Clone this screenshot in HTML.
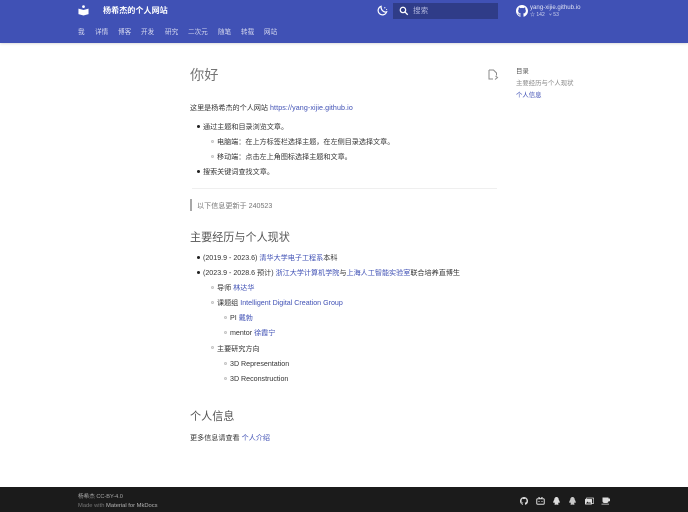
<!DOCTYPE html>
<html lang="zh"><head><meta charset="utf-8"><title>杨希杰的个人网站</title>
<style>
html,body{margin:0;padding:0;width:688px;height:512px;overflow:hidden;background:#fff}
body{font-family:"Liberation Sans","Noto Sans CJK SC",sans-serif;position:relative;font-size:7.1px;color:#333;filter:blur(.35px)}
.t{position:absolute;white-space:nowrap;line-height:10px}
a{color:#4051b5;text-decoration:none}
#h{position:absolute;left:0;top:0;width:688px;height:43px;background:#4051b5;box-shadow:0 0 3px rgba(0,0,0,.25)}
#h .n{color:#d5d8ef;font-size:6.6px;top:28px}
#f{position:absolute;left:0;top:487px;width:688px;height:25px;background:#1b1b1b}
.b{position:absolute;width:3px;height:3px;border-radius:50%;background:#222}
.o{position:absolute;width:3px;height:3px;border-radius:50%;border:.6px solid #c4c4c4;box-sizing:border-box;background:#eee}
svg{position:absolute}
</style></head><body>
<div id="h">
<svg style="left:78px;top:5px" width="11" height="11" viewBox="0 0 24 24" fill="#fff"><circle cx="12" cy="3.600" r="3"/><path d="M1 8l11 3 11-3v12l-11 3-11-3z"/></svg>
<div class="t" style="left:103px;top:6px;font-size:8.100px;color:#fff;font-weight:700">杨希杰的个人网站</div>
<div class="t n" style="left:78px">我</div>
<div class="t n" style="left:95px">详情</div>
<div class="t n" style="left:118px">博客</div>
<div class="t n" style="left:141px">开发</div>
<div class="t n" style="left:165px">研究</div>
<div class="t n" style="left:188px">二次元</div>
<div class="t n" style="left:218px">随笔</div>
<div class="t n" style="left:241px">转载</div>
<div class="t n" style="left:264px">网站</div>
<svg style="left:377px;top:5px" width="11" height="11" viewBox="0 0 24 24" fill="none" stroke="#fff" stroke-width="2.600"><path d="M9 3a9.500 9.500 0 1 0 12 12c-6 2-13-4-12-12z"/><circle cx="17" cy="6" r="1.400" fill="#fff" stroke="none"/><circle cx="21" cy="10" r="1.200" fill="#fff" stroke="none"/></svg>
<div style="position:absolute;left:393px;top:3px;width:105px;height:16px;background:#2f3c88"></div>
<svg style="left:399px;top:6px" width="10" height="10" viewBox="0 0 24 24" fill="none" stroke="#fff" stroke-width="3"><circle cx="9.500" cy="9.500" r="6.500"/><path d="M14.500 14.500L21 21"/></svg>
<div class="t" style="left:413px;top:6px;font-size:7.600px;color:#aeb4dc">搜索</div>
<svg style="left:516px;top:5px" width="12" height="12" viewBox="0 0 16 16" fill="#fff"><path d="M8 0C3.580 0 0 3.580 0 8c0 3.540 2.290 6.530 5.470 7.590.4.070.55-.17.55-.38 0-.19-.01-.82-.01-1.490-2.010.37-2.530-.49-2.690-.94-.09-.23-.48-.94-.82-1.130-.28-.15-.68-.52-.01-.53.630-.01 1.080.58 1.230.82.720 1.210 1.870.87 2.330.66.070-.52.280-.87.510-1.070-1.780-.2-3.640-.89-3.640-3.950 0-.87.310-1.590.82-2.150-.08-.2-.36-1.020.08-2.120 0 0 .67-.21 2.200.82a7.400 7.400 0 0 1 4 0c1.530-1.040 2.200-.82 2.200-.82.440 1.100.16 1.920.08 2.120.51.560.82 1.270.82 2.150 0 3.070-1.870 3.750-3.650 3.950.290.250.540.730.540 1.480 0 1.070-.01 1.930-.01 2.200 0 .21.150.46.550.38A8.010 8.010 0 0 0 16 8c0-4.420-3.580-8-8-8z"/></svg>
<div class="t" style="left:530px;top:2.500px;font-size:6.100px;color:#dfe2f3">yang-xijie.github.io</div>
<div class="t" style="left:530px;top:9.500px;font-size:5px;color:#d3d7ef">☆ 142 &nbsp;&nbsp;⑂ 53</div>
</div>

<div class="t" style="left:190px;top:66px;height:20px;line-height:20px;font-size:14.200px;color:#757575">你好</div>
<svg style="left:487px;top:69px" width="12" height="11" viewBox="0 0 24 22" fill="none" stroke="#8a8a8a" stroke-width="2"><path d="M4 2h9l6 6v5M4 2v18h8M17 14l4 3-5 4"/></svg>
<div class="t" style="left:190px;top:103px">这里是杨希杰的个人网站 <a href="#" style="letter-spacing:.1px">https://yang-xijie.github.io</a></div>

<div class="b" style="left:197px;top:125px"></div>
<div class="t" style="left:203px;top:122px">通过主题和目录浏览文章。</div>
<div class="o" style="left:210.500px;top:140px"></div>
<div class="t" style="left:217px;top:137px">电脑端：在上方标签栏选择主题，在左侧目录选择文章。</div>
<div class="o" style="left:210.500px;top:155px"></div>
<div class="t" style="left:217px;top:152px">移动端：点击左上角图标选择主题和文章。</div>
<div class="b" style="left:197px;top:170px"></div>
<div class="t" style="left:203px;top:167px">搜索关键词查找文章。</div>

<div style="position:absolute;left:192px;top:188px;width:305px;height:1px;background:#efefef"></div>
<div style="position:absolute;left:190px;top:199px;width:1.500px;height:12px;background:#a8a8a8"></div>
<div class="t" style="left:197px;top:201px;color:#757575">以下信息更新于 240523</div>

<div class="t" style="left:190px;top:231.500px;height:12px;line-height:12px;font-size:11.100px;color:#555">主要经历与个人现状</div>

<div class="b" style="left:197px;top:256px"></div>
<div class="t" style="left:203px;top:253px">(2019.9 - 2023.6) <a href="#">清华大学电子工程系</a>本科</div>
<div class="b" style="left:197px;top:271px"></div>
<div class="t" style="left:203px;top:268px">(2023.9 - 2028.6 预计) <a href="#">浙江大学计算机学院</a>与<a href="#">上海人工智能实验室</a>联合培养直博生</div>
<div class="o" style="left:210.500px;top:286px"></div>
<div class="t" style="left:217px;top:283px">导师 <a href="#">林达华</a></div>
<div class="o" style="left:210.500px;top:301px"></div>
<div class="t" style="left:217px;top:298px">课题组 <a href="#">Intelligent Digital Creation Group</a></div>
<div class="o" style="left:224px;top:316px"></div>
<div class="t" style="left:230px;top:313px">PI <a href="#">戴勃</a></div>
<div class="o" style="left:224px;top:331px"></div>
<div class="t" style="left:230px;top:328px">mentor <a href="#">徐霞宁</a></div>
<div class="o" style="left:210.500px;top:346px"></div>
<div class="t" style="left:217px;top:343.500px">主要研究方向</div>
<div class="o" style="left:224px;top:362px"></div>
<div class="t" style="left:230px;top:359px">3D Representation</div>
<div class="o" style="left:224px;top:377px"></div>
<div class="t" style="left:230px;top:374px">3D Reconstruction</div>

<div class="t" style="left:190px;top:411px;height:12px;line-height:12px;font-size:11.100px;color:#555">个人信息</div>
<div class="t" style="left:190px;top:433px">更多信息请查看 <a href="#">个人介绍</a></div>

<div class="t" style="left:516px;top:67px;font-size:6.400px;color:#555">目录</div>
<div class="t" style="left:516px;top:79px;font-size:6.400px;color:#8a8a8a">主要经历与个人现状</div>
<div class="t" style="left:516px;top:91px;font-size:6.400px"><a href="#">个人信息</a></div>

<div id="f">
<div class="t" style="left:78px;top:5px;font-size:5.600px;color:#a8a8a8">杨希杰 CC-BY-4.0</div>
<div class="t" style="left:78px;top:14px;font-size:5.800px;color:#777">Made with <span style="color:#b5b5b5">Material for MkDocs</span></div>
<svg style="left:520px;top:10px" width="8" height="8" viewBox="0 0 16 16" fill="#ddd"><path d="M8 0C3.580 0 0 3.580 0 8c0 3.540 2.290 6.530 5.470 7.590.4.070.55-.17.55-.38v-1.490c-2.010.37-2.530-.49-2.690-.94-.09-.23-.48-.94-.82-1.130-.28-.15-.68-.52-.01-.53.630-.01 1.080.58 1.230.82.720 1.210 1.870.87 2.330.66.070-.52.280-.87.510-1.070-1.780-.2-3.640-.89-3.640-3.950 0-.87.310-1.590.82-2.150-.08-.2-.36-1.020.08-2.120 0 0 .67-.21 2.200.82a7.400 7.400 0 0 1 4 0c1.530-1.040 2.200-.82 2.200-.82.440 1.100.16 1.920.08 2.120.51.560.82 1.270.82 2.150 0 3.070-1.870 3.750-3.650 3.950.290.250.540.730.540 1.480v2.200c0 .21.150.46.550.38A8.010 8.010 0 0 0 16 8c0-4.420-3.580-8-8-8z"/></svg>
<svg style="left:536px;top:10px" width="9" height="8" viewBox="0 0 18 16" fill="none" stroke="#ddd" stroke-width="2"><rect x="1.500" y="3.500" width="15" height="11" rx="2"/><path d="M5 0l3 3M13 0l-3 3M6 8v2M12 8v2"/></svg>
<svg style="left:553px;top:10px" width="7" height="8" viewBox="0 0 14 16" fill="#ddd"><path d="M7 0c3 0 4.500 2.500 4.500 5.500 1 1.500 2.500 4 2 6-1 .5-1.500-.5-2-1-.2 1.500-1 2.500-1.500 3 1 .5 1.500 1 1 1.500-1 .7-3.500.5-4 0-.5.5-3 .7-4 0-.5-.5 0-1 1-1.500-.5-.5-1.300-1.500-1.500-3-.5.5-1 1.500-2 1-.5-2 1-4.500 2-6C2.500 2.500 4 0 7 0z"/></svg>
<svg style="left:569px;top:10px" width="7" height="8" viewBox="0 0 14 16" fill="#c8c8c8"><path d="M7 0c3 0 4.500 2.500 4.500 5.500 1 1.500 2.500 4 2 6-1 .5-1.500-.5-2-1-.2 1.500-1 2.500-1.500 3 1 .5 1.500 1 1 1.500-1 .7-3.500.5-4 0-.5.5-3 .7-4 0-.5-.5 0-1 1-1.500-.5-.5-1.300-1.500-1.500-3-.5.5-1 1.500-2 1-.5-2 1-4.500 2-6C2.500 2.500 4 0 7 0z"/></svg>
<svg style="left:585px;top:10px" width="9" height="8" viewBox="0 0 18 16"><rect x="2.500" y="2" width="15" height="11" rx="1" fill="none" stroke="#ddd" stroke-width="1.500"/><rect x="0" y="4" width="14" height="11" rx="1" fill="#ddd"/><path d="M2 13l3-4 3 3 2-2 2 3z" fill="#1b1b1b"/></svg>
<svg style="left:601px;top:10px" width="9" height="8" viewBox="0 0 18 16" fill="#ddd"><path d="M3 1h12v2h1.500a1.500 1.500 0 0 1 0 5.500H15C15 11 13 12 11 12H7c-2 0-4-1-4-3.500zM1 13.500h15V15H1z"/></svg>
</div>
</body></html>
